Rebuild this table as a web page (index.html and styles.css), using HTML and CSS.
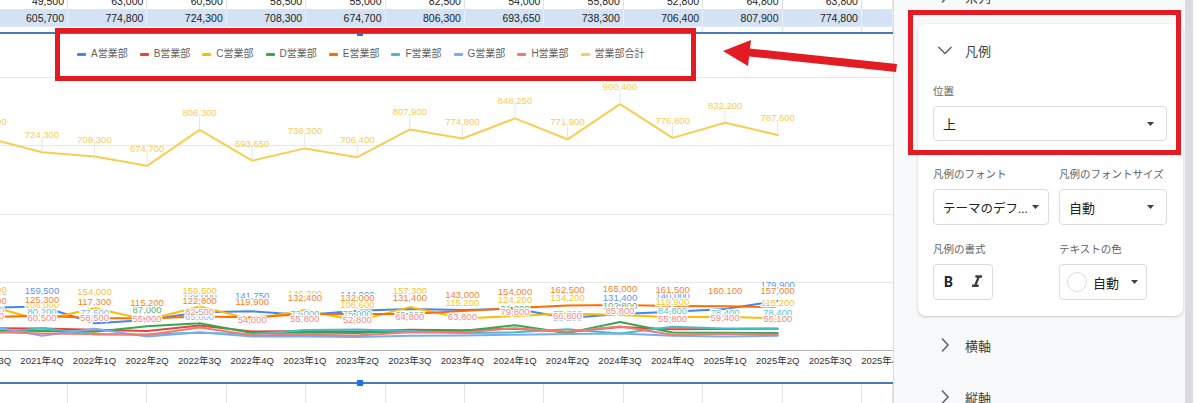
FILE: index.html
```html
<!DOCTYPE html>
<html lang="ja">
<head>
<meta charset="utf-8">
<title>グラフエディタ - 凡例</title>
<link rel="stylesheet" href="styles.css">
</head>
<body>
<div class="page">
  <main class="sheet">
    <div class="row row-cut">
      <div class="cell">49,500</div><div class="cell">63,000</div><div class="cell">60,500</div><div class="cell">58,500</div><div class="cell">55,000</div><div class="cell">82,500</div><div class="cell">54,000</div><div class="cell">55,800</div><div class="cell">52,800</div><div class="cell">64,800</div><div class="cell">63,800</div><div class="cell"></div>
    </div>
    <div class="row row-sel">
      <div class="cell">605,700</div><div class="cell">774,800</div><div class="cell">724,300</div><div class="cell">708,300</div><div class="cell">674,700</div><div class="cell">806,300</div><div class="cell">693,650</div><div class="cell">738,300</div><div class="cell">706,400</div><div class="cell">807,900</div><div class="cell">774,800</div><div class="cell"></div>
    </div>
    <div class="row row-gap">
      <div class="cell"></div><div class="cell"></div><div class="cell"></div><div class="cell"></div><div class="cell"></div><div class="cell"></div><div class="cell"></div><div class="cell"></div><div class="cell"></div><div class="cell"></div><div class="cell"></div><div class="cell"></div>
    </div>
    <section class="chart">
      <svg id="plot" class="plot" viewBox="0 0 893 348" width="893" height="348"></svg>
      <ul class="legend">
        <li class="legend-item"><span class="swatch s-a"></span>A営業部</li>
        <li class="legend-item"><span class="swatch s-b"></span>B営業部</li>
        <li class="legend-item"><span class="swatch s-c"></span>C営業部</li>
        <li class="legend-item"><span class="swatch s-d"></span>D営業部</li>
        <li class="legend-item"><span class="swatch s-e"></span>E営業部</li>
        <li class="legend-item"><span class="swatch s-f"></span>F営業部</li>
        <li class="legend-item"><span class="swatch s-g"></span>G営業部</li>
        <li class="legend-item"><span class="swatch s-h"></span>H営業部</li>
        <li class="legend-item"><span class="swatch s-t"></span>営業部合計</li>
      </ul>
      <span class="handle handle-top"></span>
      <span class="handle handle-bottom"></span>
    </section>
    <div class="row row-below row-below-1">
      <div class="cell"></div><div class="cell"></div><div class="cell"></div><div class="cell"></div><div class="cell"></div><div class="cell"></div><div class="cell"></div><div class="cell"></div><div class="cell"></div><div class="cell"></div><div class="cell"></div><div class="cell"></div>
    </div>
    <div class="row row-below">
      <div class="cell"></div><div class="cell"></div><div class="cell"></div><div class="cell"></div><div class="cell"></div><div class="cell"></div><div class="cell"></div><div class="cell"></div><div class="cell"></div><div class="cell"></div><div class="cell"></div><div class="cell"></div>
    </div>
  </main>

  <aside class="panel">
    <div class="panel-body">
      <div class="section section-peek">
        <svg class="chev" viewBox="0 0 16 16"><polyline points="5,1.5 11,8 5,14.5"/></svg>
        <span>系列</span>
      </div>
      <div class="card">
        <div class="section">
          <svg class="chev" viewBox="0 0 16 16"><polyline points="1.5,5 8,11.5 14.5,5"/></svg>
          <span>凡例</span>
        </div>
        <div class="card-body">
          <div class="field-label field-first">位置</div>
          <div class="select select-wide">
            <span>上</span>
            <svg class="caret" viewBox="0 0 7 4"><polygon points="0,0 7,0 3.5,4"/></svg>
          </div>
          <div class="field-grid">
            <div class="field">
              <div class="field-label">凡例のフォント</div>
              <div class="select select-font">
                <span class="select-text">テーマのデフ...</span>
                <svg class="caret" viewBox="0 0 7 4"><polygon points="0,0 7,0 3.5,4"/></svg>
              </div>
            </div>
            <div class="field">
              <div class="field-label">凡例のフォントサイズ</div>
              <div class="select">
                <span>自動</span>
                <svg class="caret" viewBox="0 0 7 4"><polygon points="0,0 7,0 3.5,4"/></svg>
              </div>
            </div>
            <div class="field">
              <div class="field-label">凡例の書式</div>
              <div class="fmt">
                <span class="fmt-b">B</span>
                <svg class="fmt-i" viewBox="0 0 24 24"><path d="M10 4v3h2.21l-3.42 8H6v3h8v-3h-2.21l3.42-8H18V4z"/></svg>
              </div>
            </div>
            <div class="field">
              <div class="field-label">テキストの色</div>
              <div class="color-btn">
                <span class="color-dot"></span>
                <span>自動</span>
                <svg class="caret" viewBox="0 0 7 4"><polygon points="0,0 7,0 3.5,4"/></svg>
              </div>
            </div>
          </div>
        </div>
      </div>
      <div class="section">
        <svg class="chev" viewBox="0 0 16 16"><polyline points="5,1.5 11,8 5,14.5"/></svg>
        <span>横軸</span>
      </div>
      <div class="section">
        <svg class="chev" viewBox="0 0 16 16"><polyline points="5,1.5 11,8 5,14.5"/></svg>
        <span>縦軸</span>
      </div>
    </div>
    <div class="scrollbar"></div>
    <div class="edge"></div>
  </aside>

  <div class="mark mark-legend"></div>
  <div class="mark mark-panel"></div>
  <svg class="mark-arrow" viewBox="0 0 185 40">
    <polygon points="25,12.5 182,29 181,37 25,20.5"/>
    <polygon points="8,16 36,5 33,31"/>
  </svg>
</div>
<script src="script.js"></script>
</body>
</html>
```

FILE: styles.css
```css
* { box-sizing: border-box; }

body {
  margin: 0;
  background: #fff;
  color: #202124;
  font-family: "Roboto", "Noto Sans CJK JP", sans-serif;
}

.page {
  position: relative;
  display: flex;
  width: 1200px;
  height: 403px;
  overflow: hidden;
  background: #fff;
}

/* ---------- spreadsheet ---------- */
.sheet {
  flex: none;
  width: 893px;
  overflow: hidden;
  font-family: "Liberation Sans", "Noto Sans CJK JP", sans-serif;
  font-size: 10.5px;
  color: #222;
}

.row {
  display: grid;
  grid-template-columns: 68px repeat(10, 79.4px) 1fr;
}

.cell {
  border-right: 1px solid #e2e3e3;
  padding-right: 3px;
  text-align: right;
  white-space: nowrap;
  overflow: hidden;
}

.row-cut { height: 10px; border-bottom: 1px solid #e2e3e3; }
.row-cut .cell { height: 9px; line-height: 3px; }

.row-sel { height: 17px; background: #d3e3f5; border-bottom: 1px solid #e3e9f2; }
.row-sel .cell { line-height: 16px; border-right-color: #edf2fa; }

.row-gap { height: 5px; }
.row-below-1 { height: 8px; border-bottom: 1px solid #e2e3e3; }
.row-below { height: 21px; }

/* ---------- chart ---------- */
.chart {
  position: relative;
  display: grid;
  height: 352px;
  border-top: 2px solid #4a77bf;
  border-bottom: 2px solid #4a77bf;
  background: #fff;
}

.plot, .legend { grid-area: 1 / 1; }

.plot {
  display: block;
  width: 893px;
  height: 348px;
  overflow: hidden;
}

.legend {
  align-self: start;
  display: flex;
  align-items: center;
  gap: 12px;
  margin: 0;
  padding: 14px 0 0 77px;
  list-style: none;
  font-size: 10px;
  line-height: 12px;
  color: #5f5f5f;
}

.legend-item { display: flex; align-items: center; gap: 5px; white-space: nowrap; }
.swatch { width: 9px; height: 3px; border-radius: 1px; }
.s-a { background: #4285f4; }
.s-b { background: #ea4335; }
.s-c { background: #fbbc04; }
.s-d { background: #34a853; }
.s-e { background: #ff6d01; }
.s-f { background: #46bdc6; }
.s-g { background: #7baaf7; }
.s-h { background: #f07b72; }
.s-t { background: #f9cd52; }

.handle {
  position: absolute;
  left: 357px;
  width: 6px;
  height: 6px;
  background: #1a73e8;
}
.handle-top { top: -4px; }
.handle-bottom { bottom: -4px; }

.grid { stroke: #e6e6e6; stroke-width: 1; }
.axis { stroke: #b3b3b3; stroke-width: 1.2; }
.line { fill: none; stroke-width: 2; stroke-linejoin: round; stroke-linecap: round; }
.leader { stroke: #e4e4e4; stroke-width: 1; }

.xlab {
  font-family: "Liberation Sans", "Noto Sans CJK JP", sans-serif;
  font-size: 9.5px;
  fill: #333;
  text-anchor: middle;
}

.dlab {
  font-family: "Liberation Sans", "Noto Sans CJK JP", sans-serif;
  font-size: 9.5px;
  text-anchor: middle;
}

.halo {
  paint-order: stroke;
  stroke: #fff;
  stroke-width: 2.5px;
  stroke-linejoin: round;
  fill-opacity: 0.9;
}

/* ---------- side panel ---------- */
.panel {
  flex: 1;
  display: flex;
  border-left: 1px solid #dadce0;
  background: #f8f9fa;
}

.panel-body { flex: 1; min-width: 0; padding: 0 2px 0 24px; }
.scrollbar { flex: none; width: 8px; background: #dadce0; }
.edge { flex: none; width: 7px; background: #fff; }

.section {
  display: flex;
  align-items: center;
  gap: 12px;
  height: 52px;
  padding-left: 19px;
  font-size: 13px;
  color: #3c4043;
}

.section-peek { margin-top: -30px; }
.card + .section { margin-top: 3px; }

.chev {
  flex: none;
  width: 16px;
  height: 16px;
  fill: none;
  stroke: #5f6368;
  stroke-width: 1.5;
}

.card {
  margin-top: 2px;
  background: #fff;
  border-radius: 8px;
  box-shadow: 0 1px 2px rgba(60, 64, 67, 0.18), 0 1px 3px 1px rgba(60, 64, 67, 0.06);
}

.card-body { padding: 0 16px 16px 15px; }

.field-label {
  font-size: 10.5px;
  line-height: 14px;
  color: #5f6368;
  white-space: nowrap;
}
.field-first { margin-top: 9px; }

.select {
  display: flex;
  align-items: center;
  justify-content: space-between;
  height: 36px;
  margin-top: 7px;
  padding: 0 12px 0 9px;
  border: 1px solid #dadce0;
  border-radius: 4px;
  background: #fff;
  font-size: 13px;
  color: #202124;
  white-space: nowrap;
}
.select-wide { height: 35px; }
.select-font { padding-right: 9px; font-size: 12.5px; }
.select-text { overflow: hidden; }

.caret { flex: none; width: 7px; height: 4px; fill: #3c4043; }

.field-grid {
  display: grid;
  grid-template-columns: 116px 108px;
  column-gap: 10px;
  row-gap: 18px;
  margin-top: 27px;
}

.fmt {
  display: flex;
  align-items: center;
  gap: 14px;
  width: 60px;
  height: 36px;
  margin-top: 7px;
  padding-left: 10px;
  border: 1px solid #dadce0;
  border-radius: 4px;
  background: #fff;
}
.fmt-b { width: 9px; font-size: 14px; font-weight: 700; color: #202124; }
.fmt-i { flex: none; width: 20px; height: 20px; fill: #3c4043; }

.color-btn {
  display: flex;
  align-items: center;
  width: 88px;
  height: 36px;
  margin-top: 7px;
  padding-left: 7px;
  border: 1px solid #dadce0;
  border-radius: 4px;
  background: #fff;
  font-size: 13px;
  color: #202124;
}
.color-dot {
  flex: none;
  width: 20px;
  height: 20px;
  margin-right: 6px;
  border: 1px solid #dadce0;
  border-radius: 50%;
  background: #fff;
}
.color-btn .caret { margin-left: 12px; }

/* ---------- annotations ---------- */
.mark {
  position: absolute;
  border: 5px solid #e31b23;
  pointer-events: none;
}
.mark-legend { left: 55px; top: 28px; width: 641px; height: 53px; }
.mark-panel { left: 908px; top: 10px; width: 273px; height: 145px; }

.mark-arrow {
  position: absolute;
  left: 715px;
  top: 35px;
  width: 185px;
  height: 40px;
  fill: #e31b23;
  pointer-events: none;
}
```

FILE: script.js
```js
(function () {
  var NS = 'http://www.w3.org/2000/svg';
  var svg = document.getElementById('plot');
  if (!svg) { return; }

  var TOP = 34, BASE = 350, K = 0.000273;

  var series = [
    { c: '#4285f4', v: [155000, 159500, 98000, 110000, 138000, 141750, 128000, 144000, 150000, 147000, 151000, 117000, 131400, 140000, 150000, 179900], l: [0, 1, 4, 5, 7, 12, 13, 15] },
    { c: '#ea4335', v: [80000, 79000, 74000, 70000, 90000, 68000, 70000, 68000, 74000, 72000, 78000, 66000, 84000, 76000, 77000, 78000], l: [] },
    { c: '#fbbc04', v: [161000, 108000, 154000, 110000, 159500, 112000, 146300, 106600, 157300, 115200, 124200, 134200, 128000, 119900, 122000, 115200], l: [0, 1, 2, 4, 6, 7, 8, 9, 10, 11, 13, 15] },
    { c: '#34a853', v: [72000, 70000, 67000, 87000, 98000, 62000, 64000, 62000, 69000, 70000, 91000, 62000, 102800, 64000, 63000, 62000], l: [3, 8, 10, 12] },
    { c: '#ff6d01', v: [121000, 125300, 117300, 115200, 122800, 119900, 132400, 132000, 131400, 143000, 154000, 162500, 165000, 161500, 160100, 157000], l: 'all' },
    { c: '#46bdc6', v: [60000, 80200, 57000, 58000, 63000, 58000, 73000, 75000, 70000, 62000, 65000, 75800, 60000, 84800, 78400, 78400], l: [1, 6, 7, 9, 11, 13, 14, 15] },
    { c: '#7baaf7', v: [88000, 52000, 77500, 49000, 65000, 50000, 49000, 48000, 52000, 53000, 56000, 58200, 60000, 52000, 50000, 52000], l: [0, 2, 4, 11] },
    { c: '#f07b72', v: [66000, 60500, 58500, 55000, 82500, 54000, 55800, 52800, 64800, 63800, 79800, 66800, 85800, 55800, 59400, 56100], l: 'all' }
  ];
  var total = { c: '#f9cd52', v: [774800, 724300, 708300, 674700, 806300, 693650, 738300, 706400, 807900, 774800, 848250, 771900, 900400, 776800, 832200, 787600] };

  function X(i) { return 42 + 52.55 * (i - 1); }
  function Y(v) { return BASE - v * K - TOP; }
  function fmt(v) { return String(v).replace(/\B(?=(\d{3})+(?!\d))/g, ','); }
  function add(name, attrs) {
    var e = document.createElementNS(NS, name);
    Object.keys(attrs).forEach(function (k) { e.setAttribute(k, attrs[k]); });
    svg.appendChild(e);
    return e;
  }
  function points(vals) {
    return vals.map(function (v, i) { return X(i).toFixed(1) + ',' + Y(v).toFixed(1); }).join(' ');
  }

  [250000, 500000, 750000, 1000000].forEach(function (v) {
    var y = Math.round(Y(v)) + 0.5;
    add('line', { x1: 0, x2: 893, y1: y, y2: y, 'class': 'grid' });
  });
  var base = Math.round(Y(0)) + 0.5;
  add('line', { x1: 0, x2: 893, y1: base, y2: base, 'class': 'axis' });

  for (var i = 0; i < 18; i++) {
    var label = add('text', { x: X(i).toFixed(1), y: 330, 'class': 'xlab' });
    label.textContent = (2021 + Math.floor((i + 2) / 4)) + '年' + ((i + 2) % 4 + 1) + 'Q';
  }

  series.forEach(function (s) {
    add('polyline', { points: points(s.v), stroke: s.c, 'class': 'line' });
  });
  add('polyline', { points: points(total.v), stroke: total.c, 'class': 'line' });

  total.v.forEach(function (v, i) {
    var x = X(i).toFixed(1), y = Y(v);
    add('line', { x1: x, x2: x, y1: (y - 12).toFixed(1), y2: (y - 1).toFixed(1), 'class': 'leader' });
    var t = add('text', { x: x, y: (y - 14).toFixed(1), fill: total.c, 'class': 'dlab' });
    t.textContent = fmt(v);
  });

  series.forEach(function (s) {
    s.v.forEach(function (v, i) {
      if (s.l !== 'all' && s.l.indexOf(i) === -1) { return; }
      var t = add('text', { x: X(i).toFixed(1), y: (Y(v) - 12.8).toFixed(1), fill: s.c, 'class': 'dlab halo' });
      t.textContent = fmt(v);
    });
  });
})();
```
